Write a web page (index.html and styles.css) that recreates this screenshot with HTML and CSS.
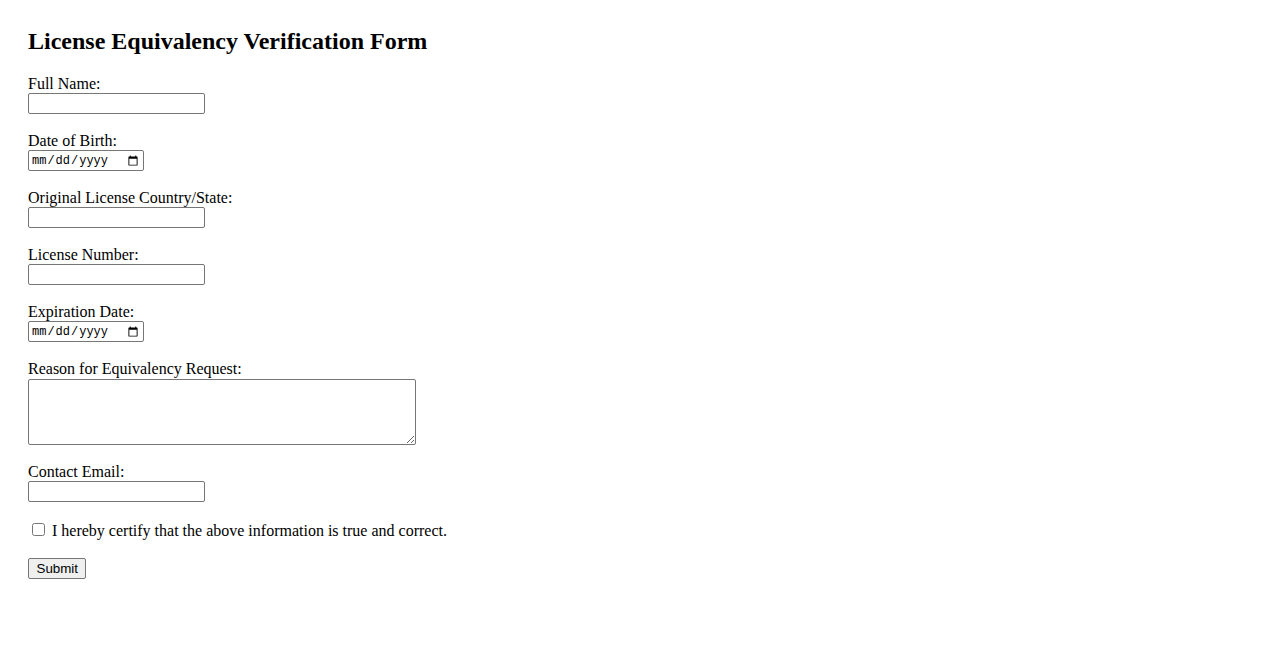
FILE: index.html
```html
<!DOCTYPE html>
<html lang="en">
<head>
<meta charset="utf-8">
<title>License Equivalency Verification Form</title>
<link rel="stylesheet" href="styles.css">
</head>
<body>
<div class="page">
  <h2 class="title">License Equivalency Verification Form</h2>
  <form class="form">
    <div class="group">
      <label class="label" for="name">Full Name:</label>
      <input class="text" type="text" id="name">
    </div>
    <div class="group">
      <label class="label" for="dob">Date of Birth:</label>
      <input class="date" type="date" id="dob">
    </div>
    <div class="group">
      <label class="label" for="country">Original License Country/State:</label>
      <input class="text" type="text" id="country">
    </div>
    <div class="group">
      <label class="label" for="num">License Number:</label>
      <input class="text" type="text" id="num">
    </div>
    <div class="group">
      <label class="label" for="exp">Expiration Date:</label>
      <input class="date" type="date" id="exp">
    </div>
    <div class="group">
      <label class="label" for="reason">Reason for Equivalency Request:</label>
      <textarea class="area" id="reason"></textarea>
    </div>
    <div class="group">
      <label class="label" for="email">Contact Email:</label>
      <input class="text" type="email" id="email">
    </div>
    <div class="group check-row">
      <input class="check" type="checkbox" id="cert">
      <label for="cert">I hereby certify that the above information is true and correct.</label>
    </div>
    <div class="actions">
      <button class="submit" type="submit">Submit</button>
    </div>
  </form>
</div>
</body>
</html>
```
FILE: styles.css
```css
html, body {
  margin: 0;
  padding: 0;
  background: #ffffff;
}
body {
  font-family: "Liberation Serif", "Times New Roman", serif;
  font-size: 16px;
  color: #000000;
}
.page {
  padding: 28px;
}
.title {
  font-size: 24px;
  font-weight: bold;
  margin: 0 0 20px 0;
}
.group {
  margin-bottom: 18px;
}
.label {
  display: block;
  line-height: 18px;
}
.text,
.date {
  display: block;
  box-sizing: border-box;
  height: 21px;
  margin: 0;
  padding: 1px 2px;
  border: 1px solid #767676;
  border-radius: 2px;
}
.text {
  width: 177px;
  font-family: "Liberation Sans", Arial, sans-serif;
  font-size: 13.33px;
}
.date {
  width: 116px;
  font-family: "Liberation Mono", "DejaVu Sans Mono", monospace;
  font-size: 12px;
}
.area {
  display: block;
  box-sizing: border-box;
  width: 388px;
  height: 66px;
  margin: 1px 0 0 0;
  padding: 2px;
  border: 1px solid #767676;
  border-radius: 2px;
  font-family: "Liberation Mono", monospace;
  font-size: 13.33px;
  resize: both;
}
.check-row {
  line-height: 18px;
  margin-bottom: 18px;
}
.check {
  width: 13px;
  height: 13px;
  margin: 3px 3px 3px 4px;
  vertical-align: 0;
}
.submit {
  box-sizing: border-box;
  height: 21px;
  padding: 1px 7.5px;
  border: 1px solid #767676;
  border-radius: 2px;
  background: #efefef;
  font-family: "Liberation Sans", Arial, sans-serif;
  font-size: 13.33px;
  color: #000000;
}
```
